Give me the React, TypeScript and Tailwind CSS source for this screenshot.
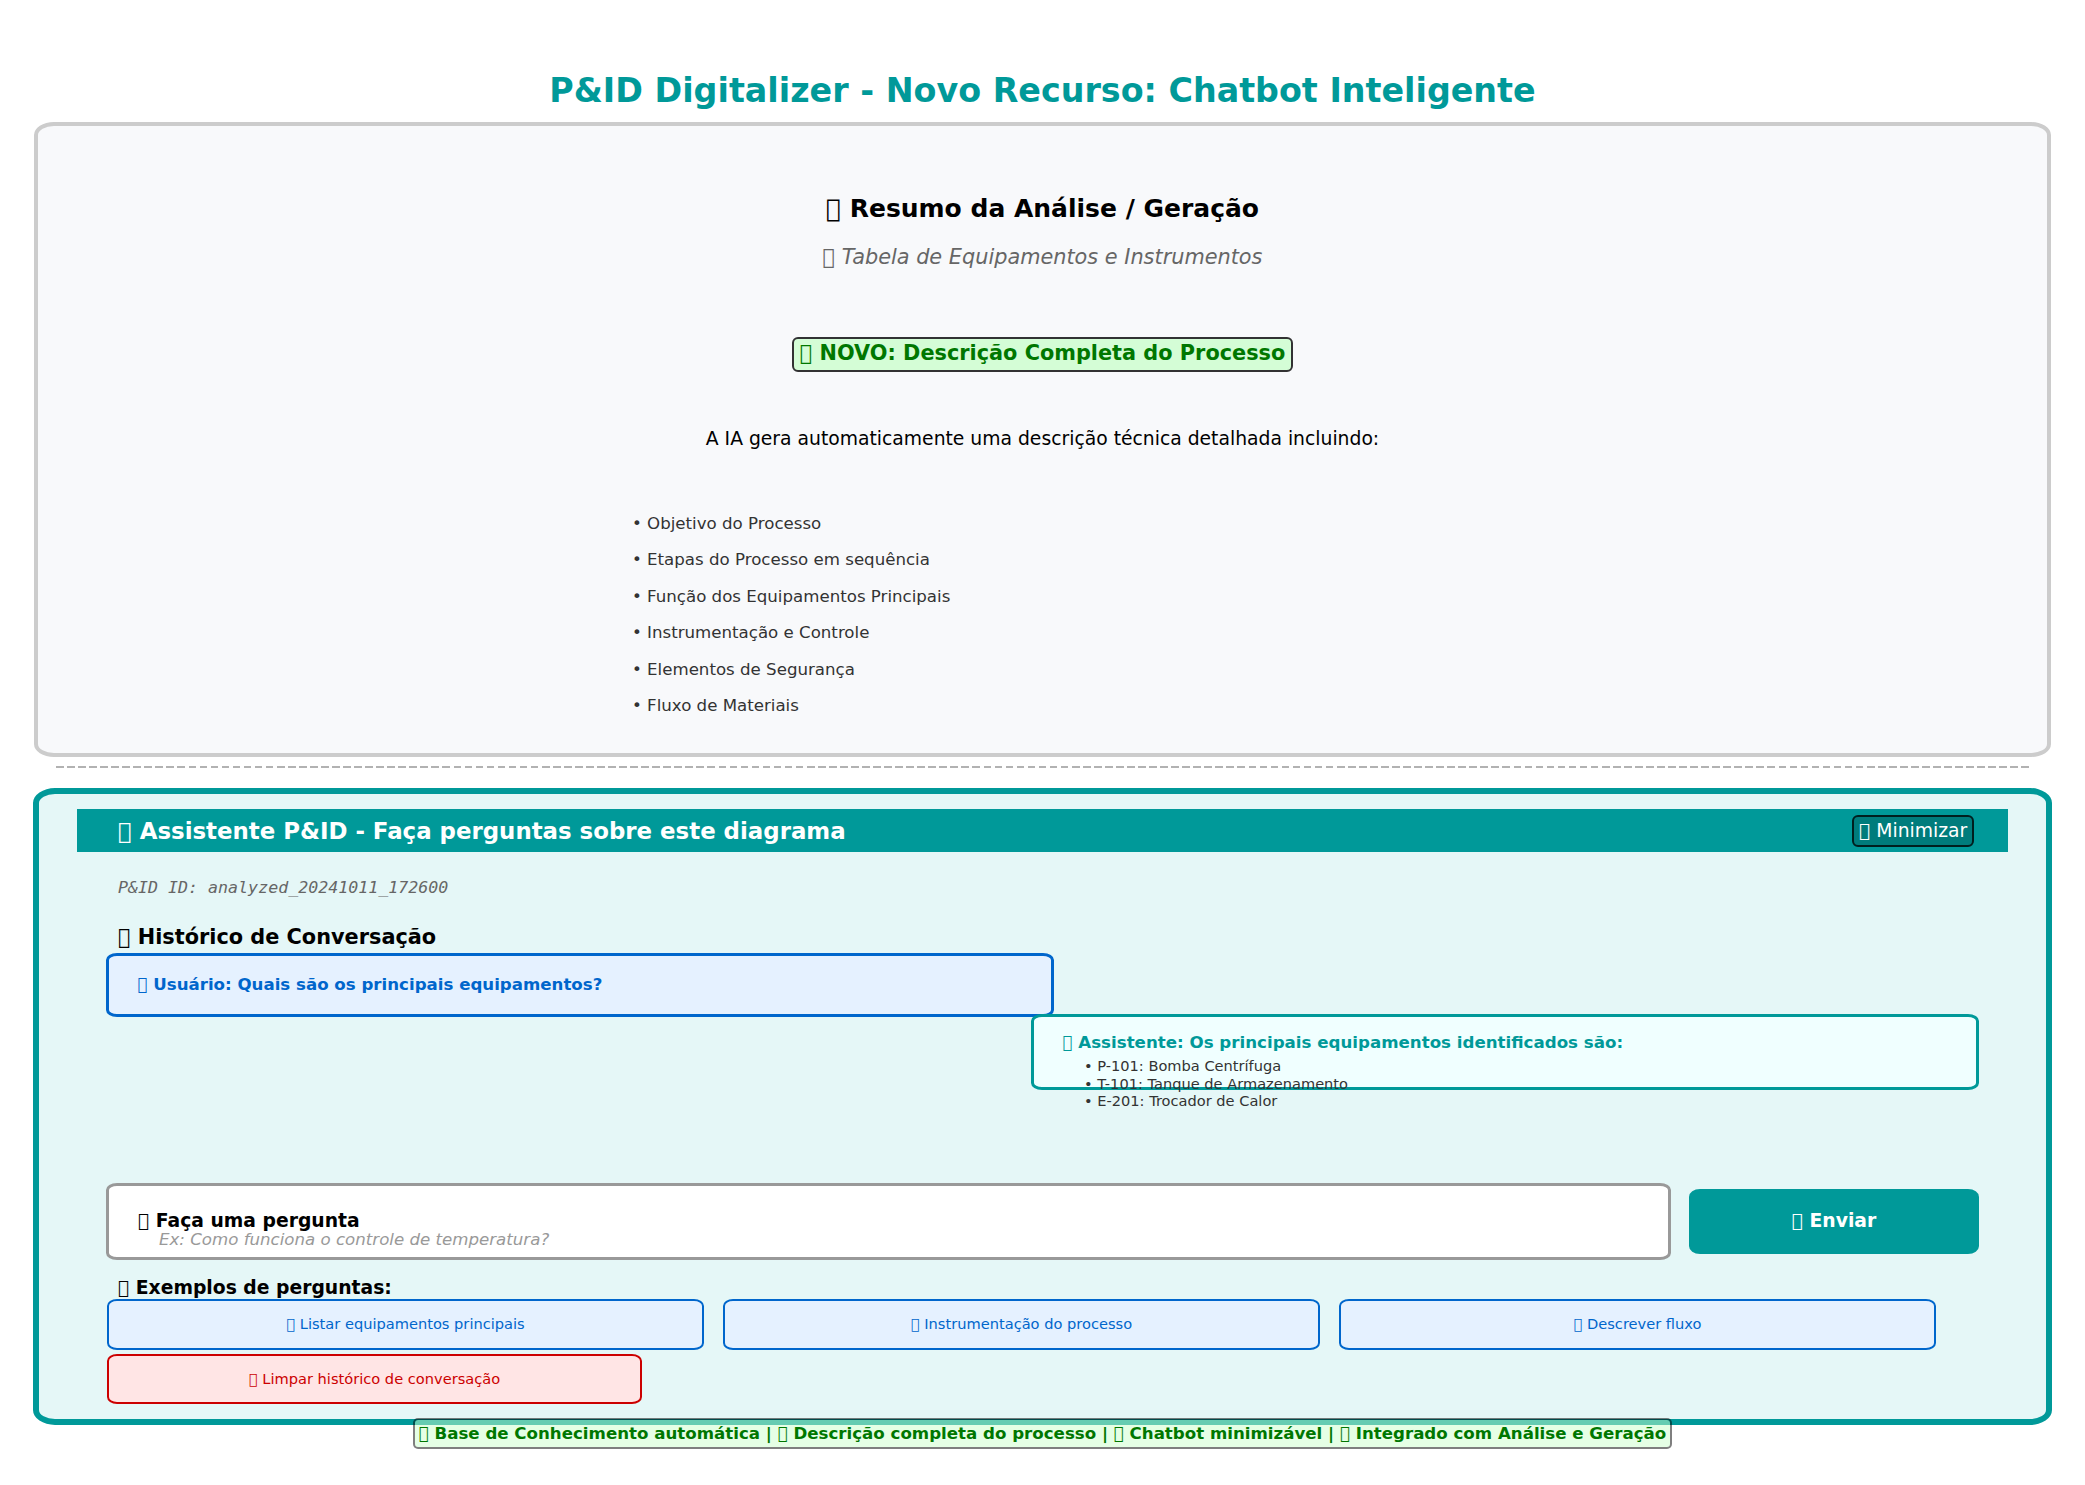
// Placeholder box drawn in front of labels: a private-use code point without a glyph.
const BOX = '\uE000';

const processTopics = [
  'Objetivo do Processo',
  'Etapas do Processo em sequência',
  'Função dos Equipamentos Principais',
  'Instrumentação e Controle',
  'Elementos de Segurança',
  'Fluxo de Materiais',
];

const equipment = [
  'P-101: Bomba Centrífuga',
  'T-101: Tanque de Armazenamento',
  'E-201: Trocador de Calor',
];

const examples = ['Listar equipamentos principais', 'Instrumentação do processo', 'Descrever fluxo'];

const features = [
  'Base de Conhecimento automática',
  'Descrição completa do processo',
  'Chatbot minimizável',
  'Integrado com Análise e Geração',
];

function AnalysisPanel() {
  return (
    <section className="mx-[34px] mt-[11px] flex h-[635px] flex-col items-center rounded-[20px/13px] border-4 border-[#cccccc] bg-[#f8f9fb] pt-[67px]">
      <h2 className="text-[25px] leading-8 font-bold">{BOX} Resumo da Análise / Geração</h2>
      <p className="mt-[18px] text-[20.83px] leading-7 text-[#666666] italic">{BOX} Tabela de Equipamentos e Instrumentos</p>
      <div className="mt-[66px] h-[35px] rounded-[6px] border-2 border-[#323233] bg-[#d4fdd6] px-[5.5px] text-[20.83px] leading-[29px] font-bold text-[#007700]">
        {BOX} NOVO: Descrição Completa do Processo
      </div>
      <p className="mt-[54px] text-[18.75px] leading-[26px]">
        A IA gera automaticamente uma descrição técnica detalhada incluindo:
      </p>
      <ul className="mt-[54px] ml-[594px] self-start text-[16.64px] leading-[36.4px] text-[#333333]">
        {processTopics.map((topic) => (
          <li key={topic}>• {topic}</li>
        ))}
      </ul>
    </section>
  );
}

function AssistantPanel() {
  return (
    <section className="mx-[33px] mt-5 flex h-[637px] flex-col items-start rounded-[22px/15px] border-6 border-[#009999] bg-[#e5f7f7] pt-[15px]">
      <header className="ml-[38px] flex h-[43px] w-[1931px] items-start justify-between bg-[#009999] pr-[34px] pl-[41px] text-white">
        <h2 className="mt-2 text-[22.88px] leading-7 font-bold">{BOX} Assistente P&amp;ID - Faça perguntas sobre este diagrama</h2>
        <button className="mt-[6px] flex h-8 rounded-[6px] border-2 border-[#001f1f] bg-[#007c7c] px-[4.75px] text-[18.75px] leading-[27px]">
          {BOX} Minimizar
        </button>
      </header>
      <p className="mt-6 ml-[79px] font-['DejaVu_Sans_Mono'] text-[16.64px] leading-6 text-[#666666] italic">
        P&amp;ID ID: analyzed_20241011_172600
      </p>
      <h3 className="mt-[23px] ml-[79px] text-[20.83px] leading-7 font-bold">{BOX} Histórico de Conversação</h3>
      <div className="mt-[2px] ml-[67px] h-16 w-[948px] rounded-[11px/7px] border-3 border-[#0066cc] bg-[#e5f1ff] pt-[17px] pl-[28.5px] text-[16.64px] leading-6 font-bold text-[#0066cc]">
        {BOX} Usuário: Quais são os principais equipamentos?
      </div>
      <div className="-mt-[3px] ml-[992px] h-[76px] w-[948px] rounded-[11px/7px] border-3 border-[#009999] bg-[#f0ffff] pt-[14px] pl-[28.5px]">
        <p className="text-[16.66px] leading-6 font-bold text-[#009999]">{BOX} Assistente: Os principais equipamentos identificados são:</p>
        <ul className="mt-[2px] ml-[21.5px] text-[14.6px] leading-[17.5px] text-[#333333]">
          {equipment.map((item) => (
            <li key={item}>• {item}</li>
          ))}
        </ul>
      </div>
      <div className="mt-[93px] ml-[67px] flex items-start gap-[18px]">
        <div className="h-[77px] w-[1565px] rounded-[11px/7px] border-3 border-[#999999] bg-white pt-[23px] pl-[29px]">
          <p className="text-[18.75px] leading-6 font-bold">{BOX} Faça uma pergunta</p>
          <p className="-mt-[3px] ml-[21px] text-[16.64px] leading-5 text-[#999999] italic">
            Ex: Como funciona o controle de temperatura?
          </p>
        </div>
        <button className="mt-[6px] flex h-[65px] w-[290px] justify-center rounded-[11px/8px] bg-[#009999] pt-5 text-[18.75px] leading-6 font-bold text-white">
          {BOX} Enviar
        </button>
      </div>
      <h4 className="mt-[15px] ml-[79px] text-[18.75px] leading-[26px] font-bold">{BOX} Exemplos de perguntas:</h4>
      <div className="-mt-[2px] ml-[68px] flex gap-[19px]">
        {examples.map((label) => (
          <button
            key={label}
            className="flex h-[51px] w-[597px] justify-center rounded-[10px/7px] border-2 border-[#0066cc] bg-[#e5f1ff] pt-[13px] text-[14.62px] leading-5 text-[#0066cc]"
          >
            {BOX} {label}
          </button>
        ))}
      </div>
      <button className="mt-1 ml-[68px] flex h-[50px] w-[535px] justify-center rounded-[10px/7px] border-2 border-[#cc0000] bg-[#ffe5e5] pt-[13px] text-[14.62px] leading-5 text-[#cc0000]">
        {BOX} Limpar histórico de conversação
      </button>
    </section>
  );
}

export default function App() {
  return (
    <main className="flex h-[1485px] w-[2085px] flex-col overflow-hidden bg-white pt-[71px] font-['DejaVu_Sans'] whitespace-nowrap text-black">
      <h1 className="text-center text-[33.33px] leading-10 font-bold text-[#009999]">
        P&amp;ID Digitalizer - Novo Recurso: Chatbot Inteligente
      </h1>
      <AnalysisPanel />
      <div className="mx-[56px] mt-[9px] h-[2px] bg-[repeating-linear-gradient(90deg,#b2b2b2_0,#b2b2b2_7.7px,transparent_7.7px,transparent_11.0417px)]" />
      <AssistantPanel />
      <footer className="relative -mt-[7px] h-[31px] self-center rounded-[5px] border-2 border-black/50 bg-[#ccffcc]/50 bg-clip-padding px-[3.5px] text-[16.65px] leading-7 font-bold text-[#007700]">
        {features.map((feature) => `${BOX} ${feature}`).join(' | ')}
      </footer>
    </main>
  );
}
